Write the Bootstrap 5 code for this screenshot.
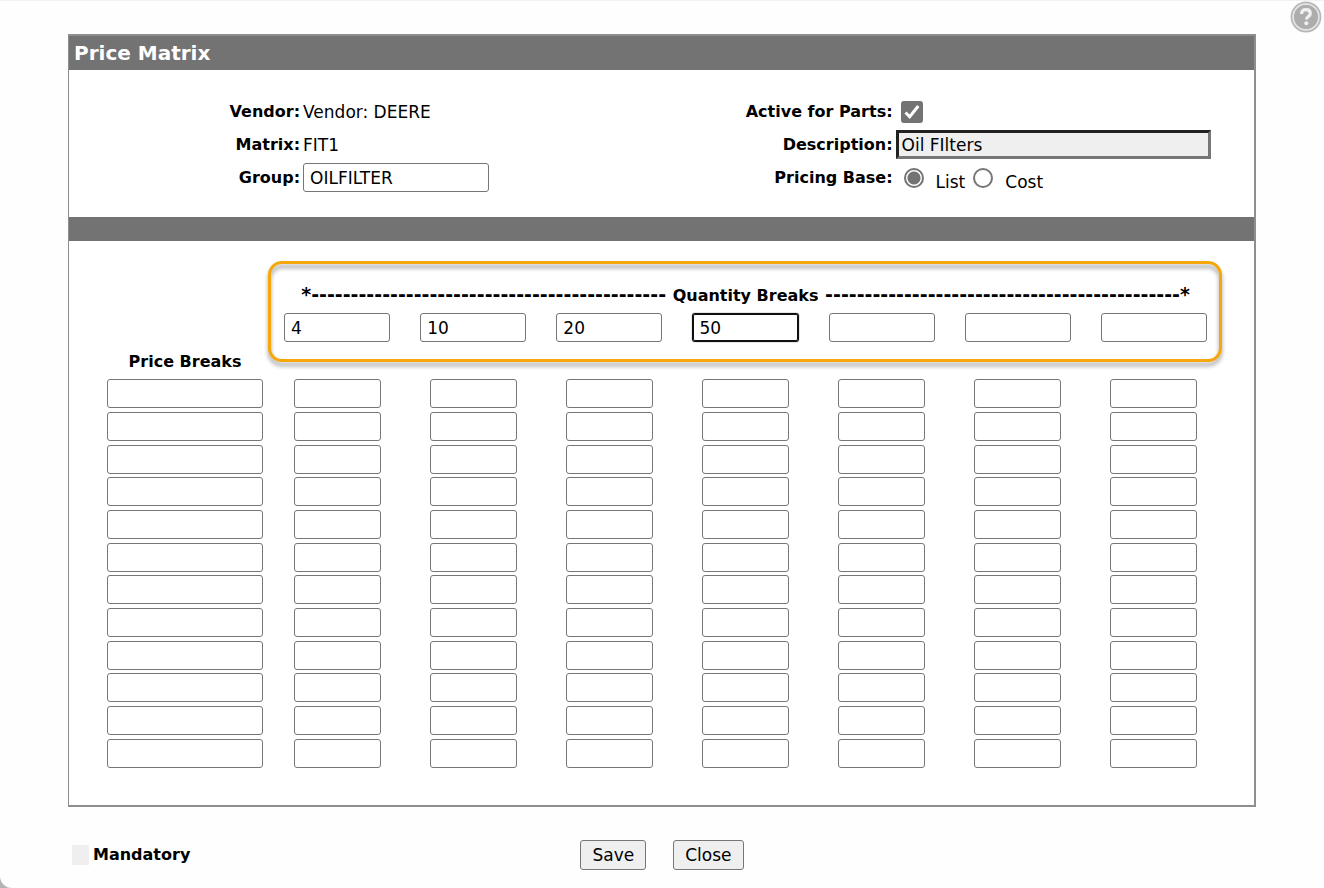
<!DOCTYPE html>
<html lang="en">
<head>
<meta charset="utf-8">
<meta name="viewport" content="width=device-width, initial-scale=1">
<title>Price Matrix</title>
<link rel="stylesheet" href="https://cdn.jsdelivr.net/npm/bootstrap@5.3.0/dist/css/bootstrap.min.css">
<style>
  html { background: #b4b4b4; }
  body { font-family: "DejaVu Sans", Verdana, sans-serif; font-size: 17px; line-height: 24px; color: #000; background: transparent; }
  .page { min-height: 100vh; background: #fefefe; border-top: 1px solid #f2f2f2; border-bottom-left-radius: 12px; padding: 33px 68px 0; }
  .help-btn { position: absolute; top: 1px; right: 2px; width: 32px; height: 32px; }
  .panel { border: 2px solid #8e8e8e; border-left-width: 1px; background: #fff; }
  .panel-title { background: #737373; color: #fff; font-size: 20px; font-weight: 700; line-height: 34px; padding-left: 5px; margin: 0; }
  .band { background: #737373; height: 24px; }
  .details { padding-top: 25px; padding-bottom: 23px; }
  .field { display: grid; grid-template-columns: 39% 1fr; column-gap: 3px; align-items: center; height: 33px; margin-bottom: 0; }
  .field-label, .matrix-table th, .legend-text { font-size: 16px; font-weight: 700; }
  .field-label { text-align: right; }
  .form-control { height: 29px; padding: 0 6px; font-size: 17px; line-height: 24px; color: #000; background: #fff; border: 1px solid #767676; border-radius: 3px; }
  .form-control:focus { color: #000; border-color: #101010; box-shadow: inset 0 0 0 1px #101010, 0 0 1px #101010; }
  .input-group-code { width: 52%; }
  .input-desc, .input-desc:focus { width: 88%; background: #efefef; border: 3px solid #767676; border-color: #222 #767676 #767676 #222; border-radius: 0; padding: 0 3px; box-shadow: none; }
  .form-check-input { margin: 0; border: 2px solid #767676; }
  .form-check-input:checked { background-color: #737373; border-color: #737373; }
  .tick { width: 22px; height: 22px; margin-left: 5px; }
  .form-check-input.tick { border-radius: 3px; }
  .form-check-input.tick:checked { background-size: 22px; background-image: url("data:image/svg+xml,%3Csvg xmlns='http://www.w3.org/2000/svg' viewBox='0 0 22 22'%3E%3Cpath d='M4.5 11.5l4.2 4.3L17.3 5' fill='none' stroke='white' stroke-width='3'/%3E%3C/svg%3E"); }
  .dot { width: 20px; height: 20px; }
  .form-check-input.dot:checked { background-color: #fff; background-image: radial-gradient(circle, #737373 6px, #fff 7px); }
  .choice-text { padding-top: 8px; }
  .matrix { padding: 20px 32px 34px; }
  .matrix-table { width: 100%; table-layout: fixed; border-collapse: collapse; text-align: center; }
  .matrix-table .first-col { width: 15%; }
  .matrix-table td, .matrix-table th { padding: 0; vertical-align: top; }
  .matrix-table .form-control { margin: 0 auto; }
  .heading-cell { position: relative; height: 52px; }
  .heading-line { padding-top: 21px; white-space: nowrap; }
  .dashes { font-size: 19px; }
  .highlight { position: absolute; top: 0; left: -1px; right: 0; height: 101px; border: 3px solid #f5a70c; border-radius: 14px; filter: drop-shadow(0 4px 2px rgba(0,0,0,.38)); pointer-events: none; }
  .qty { width: 78%; }
  .price { width: 93%; }
  .amount { width: 64%; }
  .price-heading { height: 37px; line-height: 24px; }
  .values tr { height: 33px; }
  .values tr:nth-child(3n) { height: 32px; }
  .footer-row { display: grid; grid-template-columns: 1fr auto 1fr; align-items: center; padding-top: 33px; }
  .swatch { width: 17px; height: 20px; background: #efefef; margin-left: 4px; }
  .actions { column-gap: 27px; }
  .btn-plain { height: 30px; padding: 0 11px; font-size: 17px; line-height: 28px; color: #000; background: #efefef; border: 1px solid #767676; border-radius: 3px; }
</style>
</head>
<body>
<div class="page">
  <button type="button" class="help-btn btn p-0 border-0" aria-label="Help">
    <svg class="d-block" width="32" height="32" viewBox="0 0 32 32" fill="none" aria-hidden="true">
      <circle cx="16" cy="16" r="15.4" fill="#b8b8b8"/>
      <circle cx="16" cy="16" r="12.8" stroke="#e4e4e4" stroke-width="1.8"/>
      <circle cx="16" cy="16" r="11.9" fill="#adadad"/>
      <path d="M11.6 13c0-2.8 1.9-4.3 4.4-4.3s4.3 1.4 4.3 3.7c0 3.1-3.9 3.2-3.9 6.2" stroke="#f0f0f0" stroke-width="3.2"/>
      <circle cx="16.3" cy="22.3" r="2" fill="#f0f0f0"/>
    </svg>
  </button>

  <main class="panel">
    <h1 class="panel-title">Price Matrix</h1>
    <form class="details row g-0">
      <div class="col-6">
        <div class="field"><span class="field-label">Vendor:</span><span>Vendor: DEERE</span></div>
        <div class="field"><span class="field-label">Matrix:</span><span>FIT1</span></div>
        <div class="field"><label class="field-label" for="group">Group:</label><input id="group" type="text" class="form-control input-group-code" value="OILFILTER"></div>
      </div>
      <div class="col-6">
        <div class="field"><label class="field-label" for="active">Active for Parts:</label><input id="active" type="checkbox" class="form-check-input tick" checked></div>
        <div class="field"><label class="field-label" for="desc">Description:</label><input id="desc" type="text" class="form-control input-desc" value="Oil FIlters"></div>
        <div class="field" role="radiogroup" aria-labelledby="base-label">
          <span class="field-label" id="base-label">Pricing Base:</span>
          <div class="d-flex align-items-center ps-2">
            <input id="base-list" type="radio" name="base" class="form-check-input dot" checked>
            <label class="choice-text ms-2 ps-1 me-2" for="base-list">List</label>
            <input id="base-cost" type="radio" name="base" class="form-check-input dot">
            <label class="choice-text ms-2 ps-1" for="base-cost">Cost</label>
          </div>
        </div>
      </div>
    </form>
    <div class="band"></div>

    <div class="matrix">
      <table class="matrix-table">
        <colgroup><col class="first-col"><col span="7"></colgroup>
        <thead>
          <tr>
            <td></td>
            <th colspan="7" class="heading-cell">
              <div class="heading-line"><span class="dashes">*--------------------------------------------- </span>Quantity Breaks<span class="dashes"> ---------------------------------------------*</span></div>
              <div class="highlight"></div>
            </th>
          </tr>
          <tr id="quantities"><td></td></tr>
          <tr><th class="price-heading" scope="col"><div class="pt-2">Price Breaks</div></th><td colspan="7"></td></tr>
        </thead>
        <tbody class="values" id="values"></tbody>
      </table>
    </div>
  </main>

  <div class="footer-row">
    <div class="d-flex align-items-center gap-1"><span class="swatch"></span><span class="legend-text">Mandatory</span></div>
    <div class="actions d-flex">
      <button type="button" class="btn btn-plain">Save</button>
      <button type="button" class="btn btn-plain">Close</button>
    </div>
  </div>
</div>
<script src="https://cdn.jsdelivr.net/npm/bootstrap@5.3.0/dist/js/bootstrap.bundle.min.js"></script>
<script>
  function addInput(row, kind, label, value) {
    const input = document.createElement('input');
    input.type = 'text';
    input.className = 'form-control ' + kind;
    input.value = value;
    input.setAttribute('aria-label', label);
    row.insertCell().append(input);
    return input;
  }
  const quantities = ['4', '10', '20', '50', '', '', ''];
  const head = document.getElementById('quantities');
  const boxes = quantities.map((q, i) => addInput(head, 'qty', 'Quantity break ' + (i + 1), q));
  const body = document.getElementById('values');
  for (let r = 1; r <= 12; r++) {
    const row = body.insertRow();
    addInput(row, 'price', 'Price break ' + r, '');
    quantities.forEach((q, i) => addInput(row, 'amount', 'Price ' + r + ', quantity ' + (i + 1), ''));
  }
  boxes[3].focus();
</script>
</body>
</html>
